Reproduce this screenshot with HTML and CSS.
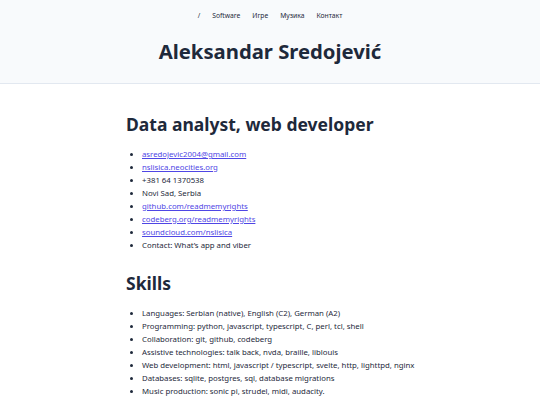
FILE: index.html
```html
<!DOCTYPE html>
<html lang="sr">
<head>
<meta charset="utf-8">
<title>Aleksandar Sredojević</title>
<link rel="stylesheet" href="styles.css">
</head>
<body>
<header class="site-header">
  <nav class="nav">
    <a href="#">/</a>
    <a href="#">Software</a>
    <a href="#">Игре</a>
    <a href="#">Музика</a>
    <a href="#">Контакт</a>
  </nav>
  <h1 class="title">Aleksandar Sredojević</h1>
</header>
<main class="content">
  <h2 class="section-title">Data analyst, web developer</h2>
  <ul class="list">
    <li><a href="#">asredojevic2004@gmail.com</a></li>
    <li><a href="#">nslisica.neocities.org</a></li>
    <li>+381 64 1370538</li>
    <li>Novi Sad, Serbia</li>
    <li><a href="#">github.com/readmemyrights</a></li>
    <li><a href="#">codeberg.org/readmemyrights</a></li>
    <li><a href="#">soundcloud.com/nslisica</a></li>
    <li>Contact: What’s app and viber</li>
  </ul>
  <h2 class="section-title">Skills</h2>
  <ul class="list">
    <li>Languages: Serbian (native), English (C2), German (A2)</li>
    <li>Programming: python, javascript, typescript, C, perl, tcl, shell</li>
    <li>Collaboration: git, github, codeberg</li>
    <li>Assistive technologies: talk back, nvda, braille, liblouis</li>
    <li>Web development: html, javascript / typescript, svelte, http, lighttpd, nginx</li>
    <li>Databases: sqlite, postgres, sql, database migrations</li>
    <li>Music production: sonic pi, strudel, midi, audacity.</li>
  </ul>
</main>
</body>
</html>
```

FILE: styles.css
```css
html, body {
  margin: 0;
  padding: 0;
  background: #ffffff;
  color: #1e293b;
  font-family: "Noto Sans", "Open Sans", sans-serif;
}

.site-header {
  background: #f8fafc;
  border-bottom: 1px solid #e2e8f0;
  padding: 11px 0 18px;
  text-align: center;
}

.nav {
  display: flex;
  justify-content: center;
  gap: 12px;
  font-size: 6.75px;
  line-height: 10px;
}

.nav a {
  color: #1e293b;
  text-decoration: none;
}

.title {
  margin: 16px 0 0;
  font-size: 20.25px;
  line-height: 28px;
  font-weight: 700;
}

.content {
  max-width: 288px;
  margin: 0 auto;
  padding: 28px 0 20px;
}

.section-title {
  margin: 0 0 12px;
  font-size: 17.5px;
  line-height: 24px;
  font-weight: 700;
}

.list {
  margin: 0 0 19px;
  padding-left: 16px;
  font-size: 7.8px;
  line-height: 13px;
}

.list li {
  white-space: nowrap;
}

.list a {
  color: #4f46e5;
}
```
